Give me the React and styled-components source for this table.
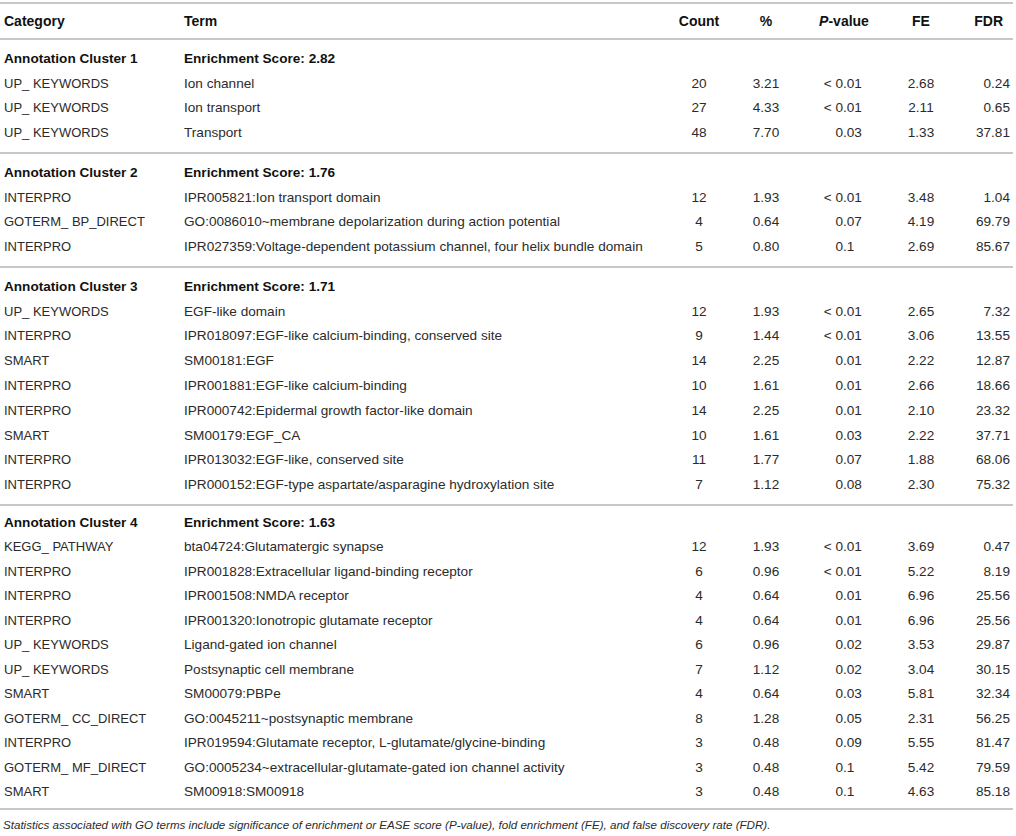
import React from "react";
import styled, { createGlobalStyle } from "styled-components";

const Global = createGlobalStyle`
  html, body { margin: 0; padding: 0; background: #ffffff; }
  body { font-family: "Liberation Sans", Arial, Helvetica, sans-serif; color: #231f20; }
`;

const COLS = "180px 485px 68px 66px 90px 64px 60px";

const Page = styled.div`
  width: 1013px;
  padding-top: 2px;
`;

const Table = styled.div`
  border-top: 2px solid #c8c8c8;
  border-bottom: 2px solid #c8c8c8;
`;

const HeadRow = styled.div`
  display: grid;
  grid-template-columns: ${COLS};
  height: 34px;
  align-items: center;
  border-bottom: 2px solid #c8c8c8;
  font-size: 14px;
  font-weight: bold;
  color: #111;
`;

const Group = styled.div`
  padding-top: ${(p) => p.$pt}px;
  padding-bottom: ${(p) => p.$pb}px;
  & + & { border-top: 2px solid #c8c8c8; }
`;

const Row = styled.div`
  display: grid;
  grid-template-columns: ${COLS};
  height: ${(p) => p.$h}px;
  align-items: center;
  font-size: 13.6px;
  font-weight: ${(p) => (p.$bold ? "bold" : "normal")};
  color: ${(p) => (p.$bold ? "#111" : "#2b2b2b")};
  white-space: nowrap;
`;

const Cell = styled.div`
  padding-left: ${(p) => (p.$align === "left" ? 4 : 0)}px;
  padding-right: ${(p) => (p.$align === "right" ? p.$pr ?? 3 : 0)}px;
  text-align: ${(p) => p.$align || "center"};
`;

const CategoryCell = styled.div`
  padding-left: 4px;
  font-size: 13px;
`;

const Dec = styled.div`
  display: flex;
`;
const DecInt = styled.span`
  width: 44px;
  text-align: right;
`;
const DecFrac = styled.span`
  text-align: left;
`;

const Italic = styled.span`
  font-style: italic;
`;

const Caption = styled.p`
  margin: 7px 0 0 3px;
  font-size: 11.6px;
  line-height: 16px;
  font-style: italic;
  color: #2b2b2b;
`;

const groups = [
  {
    name: "Annotation Cluster 1",
    score: "2.82",
    h: 24.8,
    pt: 6,
    pb: 6.8,
    rows: [
      ["UP_ KEYWORDS", "Ion channel", "20", "3.21", "< 0.01", "2.68", "0.24"],
      ["UP_ KEYWORDS", "Ion transport", "27", "4.33", "< 0.01", "2.11", "0.65"],
      ["UP_ KEYWORDS", "Transport", "48", "7.70", "0.03", "1.33", "37.81"],
    ],
  },
  {
    name: "Annotation Cluster 2",
    score: "1.76",
    h: 24.8,
    pt: 6,
    pb: 6.8,
    rows: [
      ["INTERPRO", "IPR005821:Ion transport domain", "12", "1.93", "< 0.01", "3.48", "1.04"],
      ["GOTERM_ BP_DIRECT", "GO:0086010~membrane depolarization during action potential", "4", "0.64", "0.07", "4.19", "69.79"],
      ["INTERPRO", "IPR027359:Voltage-dependent potassium channel, four helix bundle domain", "5", "0.80", "0.1", "2.69", "85.67"],
    ],
  },
  {
    name: "Annotation Cluster 3",
    score: "1.71",
    h: 24.8,
    pt: 6,
    pb: 6.8,
    rows: [
      ["UP_ KEYWORDS", "EGF-like domain", "12", "1.93", "< 0.01", "2.65", "7.32"],
      ["INTERPRO", "IPR018097:EGF-like calcium-binding, conserved site", "9", "1.44", "< 0.01", "3.06", "13.55"],
      ["SMART", "SM00181:EGF", "14", "2.25", "0.01", "2.22", "12.87"],
      ["INTERPRO", "IPR001881:EGF-like calcium-binding", "10", "1.61", "0.01", "2.66", "18.66"],
      ["INTERPRO", "IPR000742:Epidermal growth factor-like domain", "14", "2.25", "0.01", "2.10", "23.32"],
      ["SMART", "SM00179:EGF_CA", "10", "1.61", "0.03", "2.22", "37.71"],
      ["INTERPRO", "IPR013032:EGF-like, conserved site", "11", "1.77", "0.07", "1.88", "68.06"],
      ["INTERPRO", "IPR000152:EGF-type aspartate/asparagine hydroxylation site", "7", "1.12", "0.08", "2.30", "75.32"],
    ],
  },
  {
    name: "Annotation Cluster 4",
    score: "1.63",
    h: 24.5,
    pt: 4,
    pb: 4,
    rows: [
      ["KEGG_ PATHWAY", "bta04724:Glutamatergic synapse", "12", "1.93", "< 0.01", "3.69", "0.47"],
      ["INTERPRO", "IPR001828:Extracellular ligand-binding receptor", "6", "0.96", "< 0.01", "5.22", "8.19"],
      ["INTERPRO", "IPR001508:NMDA receptor", "4", "0.64", "0.01", "6.96", "25.56"],
      ["INTERPRO", "IPR001320:Ionotropic glutamate receptor", "4", "0.64", "0.01", "6.96", "25.56"],
      ["UP_ KEYWORDS", "Ligand-gated ion channel", "6", "0.96", "0.02", "3.53", "29.87"],
      ["UP_ KEYWORDS", "Postsynaptic cell membrane", "7", "1.12", "0.02", "3.04", "30.15"],
      ["SMART", "SM00079:PBPe", "4", "0.64", "0.03", "5.81", "32.34"],
      ["GOTERM_ CC_DIRECT", "GO:0045211~postsynaptic membrane", "8", "1.28", "0.05", "2.31", "56.25"],
      ["INTERPRO", "IPR019594:Glutamate receptor, L-glutamate/glycine-binding", "3", "0.48", "0.09", "5.55", "81.47"],
      ["GOTERM_ MF_DIRECT", "GO:0005234~extracellular-glutamate-gated ion channel activity", "3", "0.48", "0.1", "5.42", "79.59"],
      ["SMART", "SM00918:SM00918", "3", "0.48", "0.1", "4.63", "85.18"],
    ],
  },
];

function PValue({ v }) {
  const i = v.indexOf(".");
  return (
    <Dec>
      <DecInt>{v.slice(0, i)}</DecInt>
      <DecFrac>{v.slice(i)}</DecFrac>
    </Dec>
  );
}

export default function App() {
  return (
    <>
      <Global />
      <Page>
        <Table>
          <HeadRow>
            <Cell $align="left">Category</Cell>
            <Cell $align="left">Term</Cell>
            <Cell>Count</Cell>
            <Cell>%</Cell>
            <Cell>
              <Italic>P</Italic>-value
            </Cell>
            <Cell>FE</Cell>
            <Cell $align="right" $pr={10}>FDR</Cell>
          </HeadRow>
          {groups.map((g) => (
            <Group key={g.name} $pt={g.pt} $pb={g.pb}>
              <Row $h={g.h} $bold>
                <Cell $align="left">{g.name}</Cell>
                <Cell $align="left">Enrichment Score: {g.score}</Cell>
              </Row>
              {g.rows.map((r, k) => (
                <Row key={k} $h={g.h}>
                  <CategoryCell>{r[0]}</CategoryCell>
                  <Cell $align="left">{r[1]}</Cell>
                  <Cell>{r[2]}</Cell>
                  <Cell>{r[3]}</Cell>
                  <PValue v={r[4]} />
                  <Cell>{r[5]}</Cell>
                  <Cell $align="right">{r[6]}</Cell>
                </Row>
              ))}
            </Group>
          ))}
        </Table>
        <Caption>
          Statistics associated with GO terms include significance of enrichment or EASE score (P-value), fold
          enrichment (FE), and false discovery rate (FDR).
        </Caption>
      </Page>
    </>
  );
}
